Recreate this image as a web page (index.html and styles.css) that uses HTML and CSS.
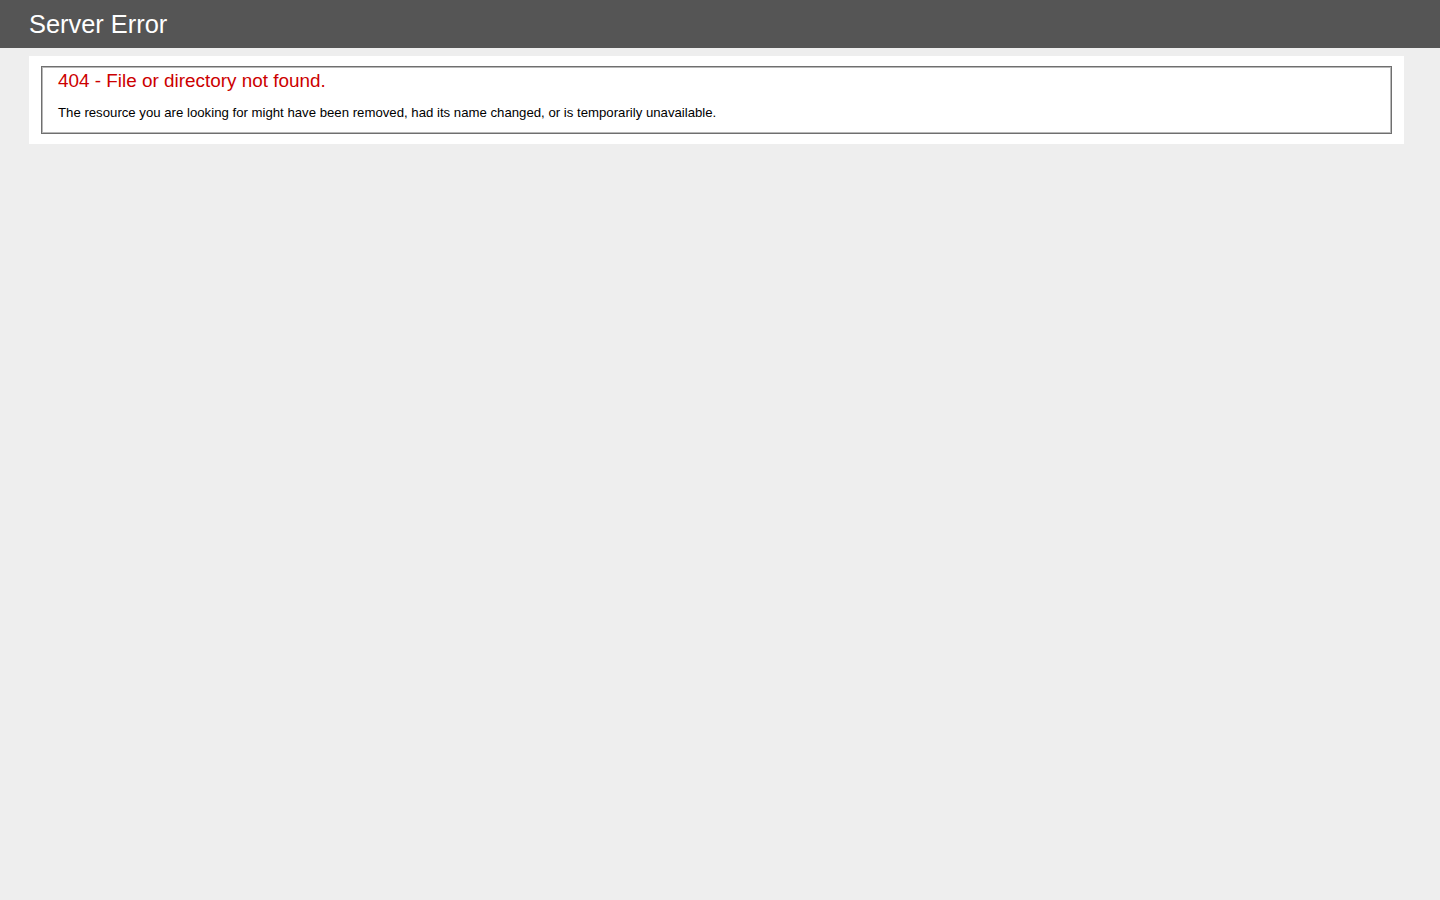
FILE: index.html
```html
<!DOCTYPE html>
<html lang="en">
<head>
<meta charset="utf-8">
<title>IIS 404 - File or directory not found.</title>
<link rel="stylesheet" href="styles.css">
</head>
<body>
<div class="header"><h1>Server Error</h1></div>
<div class="content">
  <div class="content-container">
    <fieldset>
      <h2>404 - File or directory not found.</h2>
      <h3>The resource you are looking for might have been removed, had its name changed, or is temporarily unavailable.</h3>
    </fieldset>
  </div>
</div>
</body>
</html>
```

FILE: styles.css
```css
body {
  margin: 0;
  font-size: 11.2px;
  font-family: "Liberation Sans", Arial, sans-serif;
  background: #eeeeee;
}

.header {
  padding: 6px 29px;
  height: 36px;
  background-color: #555555;
  color: #fff;
}

h1 {
  margin: 0;
  font-size: 25.4px;
  font-weight: normal;
  line-height: 36px;
  color: #fff;
}

.content {
  margin-left: 29px;
}

.content-container {
  background: #fff;
  width: 1355px;
  margin-top: 8px;
  padding: 10px;
}

fieldset {
  margin: 0 2px;
  padding: 1px 16px 11px 16px;
  border: 1px solid #6f6f6f;
  box-shadow: inset 0 0 0 1px #b8b8b8;
}

h2 {
  margin: 0;
  font-size: 18.9px;
  font-weight: normal;
  line-height: 25px;
  color: #cc0000;
}

h3 {
  margin: 11px 0 0 0;
  font-size: 13.2px;
  font-weight: normal;
  line-height: 18px;
  color: #000;
}
```
